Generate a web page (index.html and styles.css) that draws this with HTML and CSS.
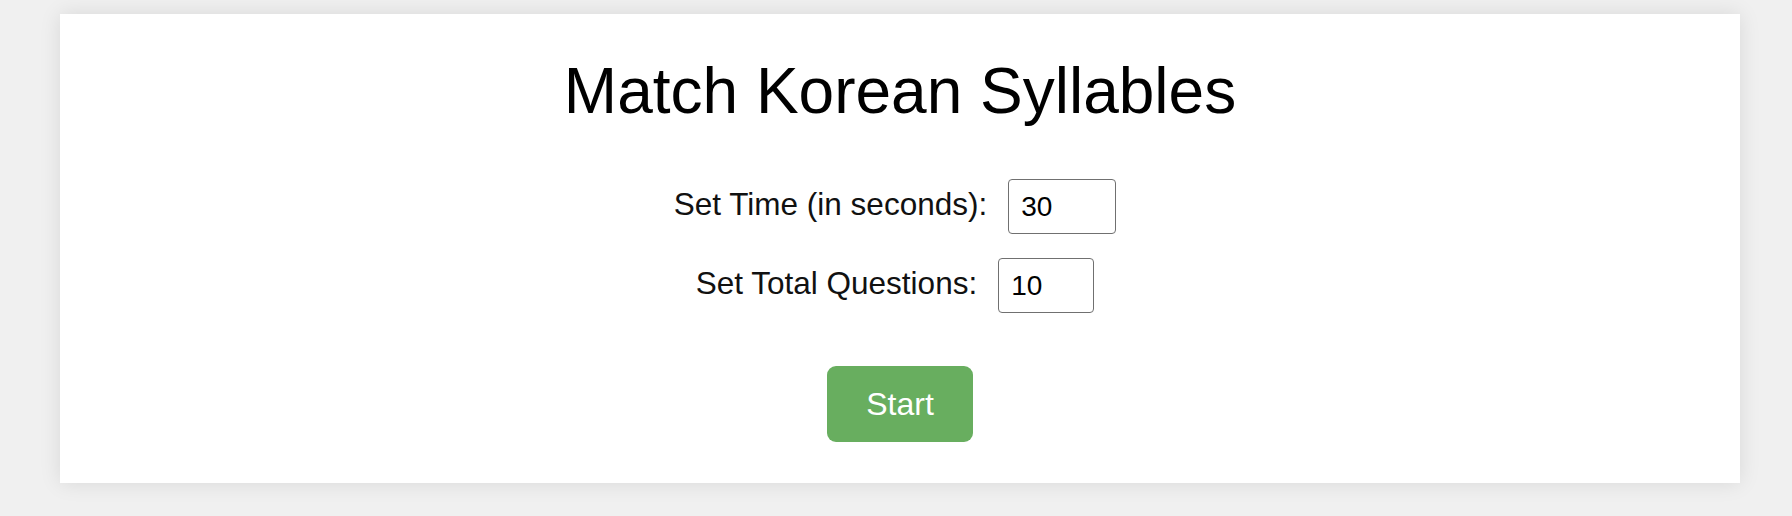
FILE: index.html
```html
<!DOCTYPE html>
<html lang="en">
<head>
<meta charset="utf-8">
<title>Match Korean Syllables</title>
<link rel="stylesheet" href="styles.css">
</head>
<body>
  <main class="card">
    <h1 class="title">Match Korean Syllables</h1>
    <div class="settings">
      <div class="row">
        <label class="label" for="time">Set Time (in seconds):</label>
        <input class="field field-time" id="time" type="text" value="30">
      </div>
      <div class="row">
        <label class="label" for="questions">Set Total Questions:</label>
        <input class="field field-questions" id="questions" type="text" value="10">
      </div>
    </div>
    <button class="start" type="button">Start</button>
  </main>
</body>
</html>
```

FILE: styles.css
```css
html, body {
  margin: 0;
  padding: 0;
}

body {
  background: #f0f0f0;
  font-family: "Liberation Sans", Arial, sans-serif;
  padding: 14px 52px 0 60px;
  min-height: 516px;
  box-sizing: border-box;
}

.card {
  background: #ffffff;
  box-shadow: 0 0 20px rgba(0, 0, 0, 0.1);
  padding: 40px 0 41px;
  display: flex;
  flex-direction: column;
  align-items: center;
}

.title {
  margin: 0 0 51px;
  font-size: 64px;
  line-height: 74px;
  font-weight: 400;
  color: #000;
}

.settings {
  display: flex;
  flex-direction: column;
  gap: 24px;
  align-items: center;
}

.row {
  display: flex;
  align-items: center;
  margin-right: 10px;
}

.label {
  font-size: 31.5px;
  color: #111;
  margin-right: 21px;
  position: relative;
  top: -2px;
}

.field {
  box-sizing: border-box;
  height: 55px;
  font-family: "Liberation Sans", Arial, sans-serif;
  font-size: 28px;
  padding: 0 12px;
  border: 1.5px solid #707070;
  border-radius: 4px;
  color: #000;
  background: #fff;
  outline: none;
}

.field-time {
  width: 108px;
}

.field-questions {
  width: 96px;
}

.start {
  margin-top: 53px;
  width: 146px;
  height: 76px;
  background: #68ae5f;
  color: #fff;
  border: none;
  border-radius: 9px;
  font-family: "Liberation Sans", Arial, sans-serif;
  font-size: 32px;
  cursor: pointer;
}
```
